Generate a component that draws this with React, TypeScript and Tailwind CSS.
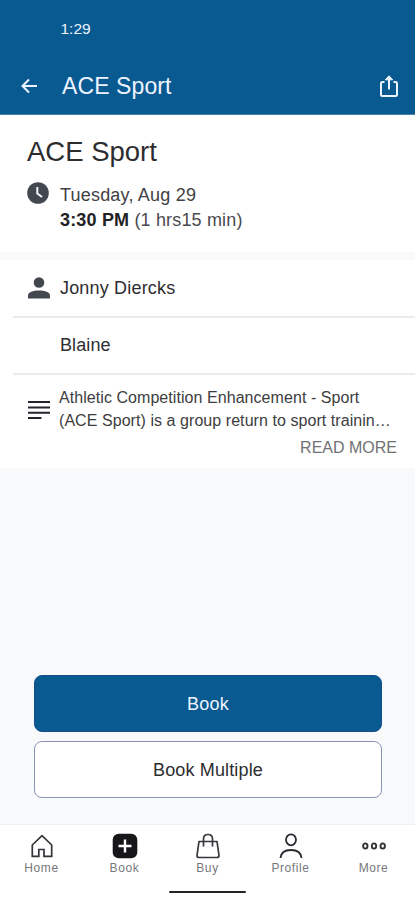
import React from "react";

function NavItem({ label, children }: { label: string; children: React.ReactNode }) {
  return (
    <button className="flex w-[83px] flex-col items-center">
      <span className="flex h-[28px] items-center justify-center">{children}</span>
      <span className="text-[12px] leading-[16px] tracking-[0.6px] text-[#77787b]">{label}</span>
    </button>
  );
}

export default function App() {
  return (
    <div className="flex h-[900px] w-[415px] flex-col overflow-hidden whitespace-nowrap bg-[#f7f9fb] font-['Liberation_Sans',Arial,sans-serif] text-[#2d2d30]">
      <header className="flex h-[115px] shrink-0 flex-col border-b border-[#4c7fac] bg-[#095a90] text-[#eef4ff]">
        <div className="pl-[60.500px] pt-[19px] text-[15.500px] leading-[20px]">1:29</div>
        <div className="mt-[32px] flex h-[30px] items-center pl-[20px] pr-[16px]">
          <svg width="18" height="18" viewBox="0 0 18 18" fill="none" stroke="currentColor" strokeWidth="2">
            <path d="M17 9H2.500M9 2.500 2.500 9l6.500 6.500" />
          </svg>
          <h1 className="ml-[24px] flex-1 text-[23px] leading-[30px] tracking-[0.1px]">ACE Sport</h1>
          <svg width="20" height="24" viewBox="0 0 20 24" fill="none" stroke="currentColor" strokeWidth="2" strokeLinejoin="round">
            <path d="M5.500 8H3.500Q2 8 2 9.500V20.500Q2 22 3.500 22H16.500Q18 22 18 20.500V9.500Q18 8 16.500 8H14.500M10 15.500V4" />
            <path d="M10 1.800 6.200 5.800H13.800Z" fill="currentColor" strokeWidth="1" />
          </svg>
        </div>
      </header>

      <section className="h-[137px] shrink-0 bg-white pl-[27px] pt-[20px]">
        <h2 className="text-[27.500px] leading-[34px]">ACE Sport</h2>
        <div className="mt-[13px] flex items-start">
          <svg width="22" height="22" viewBox="0 0 22 22">
            <circle cx="11" cy="11" r="10.800" fill="#434850" />
            <path d="M10.300 5v6.500l4.800 3.500" fill="none" stroke="#f4f5f8" strokeWidth="2" />
          </svg>
          <div className="ml-[11px] pt-px text-[18px] leading-[25px]">
            <div className="tracking-[0.2px] text-[#414145]">Tuesday, Aug 29</div>
            <div className="tracking-[0.17px]"><b className="text-[#222225]">3:30 PM</b> <span className="text-[#4a4a4e]">(1 hrs15 min)</span></div>
          </div>
        </div>
      </section>

      <section className="mt-[8px] h-[208px] shrink-0 bg-white pl-[13px]">
        <div className="flex h-[58px] items-center border-b-2 border-[#ebebed] pl-[15px]">
          <svg width="22" height="22" viewBox="0 0 22 22" fill="#434850">
            <circle cx="11" cy="5.500" r="5.300" />
            <path d="M0 21.500V18.500C0 15 5 13.500 11 13.500s11 1.500 11 5V21.500Z" />
          </svg>
          <span className="ml-[10px] text-[18px] leading-[24px] tracking-[0.18px]">Jonny Diercks</span>
        </div>
        <div className="flex h-[57px] items-center border-b-2 border-[#ebebed] pl-[47px] pb-[1px] text-[18px] leading-[24px] tracking-[0.1px]">Blaine</div>
        <div className="flex pl-[15px] pt-[11px]">
          <svg className="mt-[14px]" width="22" height="20" viewBox="0 0 22 20" fill="none" stroke="#24242f" strokeWidth="2">
            <path d="M0 2H22M0 7.500H22M0 12.800H22M0 18H13.500" />
          </svg>
          <div className="ml-[9px] text-[16px] leading-[23px] tracking-[0.06px] text-[#3d3d40]">
            <div>Athletic Competition Enhancement - Sport</div>
            <div>(ACE Sport) is a group return to sport trainin…</div>
          </div>
        </div>
        <div className="mt-[6px] pr-[18px] text-right text-[16px] leading-[20px] text-[#707174]">READ MORE</div>
      </section>

      <div className="flex flex-1 flex-col justify-end gap-[9px] pb-[26px] pl-[34px] pr-[33px]">
        <button className="h-[57px] rounded-[8px] border border-[#154e8a] bg-[#095a90] pt-px text-[18px] tracking-[0.2px] text-[#edf4ff]">Book</button>
        <button className="h-[57px] rounded-[8px] border border-[#8795b2] bg-white pt-px text-[18px] tracking-[0.15px]">Book Multiple</button>
      </div>

      <nav className="flex h-[76px] shrink-0 flex-col items-center border-t border-[#eef0f2] bg-white">
        <div className="flex w-full pt-[7px]">
          <NavItem label="Home">
            <svg width="24" height="24" viewBox="0 0 24 24" fill="none" stroke="#34343b" strokeWidth="1.700">
              <path d="M2.300 11V22.300H8.800V15.500H14V22.300H21.700V11L12 1.700 2.300 11Z" />
            </svg>
          </NavItem>
          <NavItem label="Book">
            <svg width="26" height="26" viewBox="0 0 26 26">
              <rect x="0.700" y="0.700" width="24.600" height="24.500" rx="6" fill="#17171a" />
              <path d="M13 6.500V19.500M6.500 13H19.500" stroke="#fff" strokeWidth="2.400" />
            </svg>
          </NavItem>
          <NavItem label="Buy">
            <svg width="26" height="26" viewBox="0 0 26 26" fill="none" stroke="#37373c" strokeWidth="1.700" strokeLinejoin="round">
              <path d="M4 8.500H22L24 22.500Q24 24.500 22 24.500H4Q2 24.500 2 22.500Z" />
              <path d="M8.500 13.500V6Q8.500 1.500 13 1.500T17.500 6V13.500" />
            </svg>
          </NavItem>
          <NavItem label="Profile">
            <svg width="24" height="26" viewBox="0 0 24 26" fill="none" stroke="#29292f" strokeWidth="1.800">
              <ellipse cx="12" cy="6.800" rx="5" ry="5.500" />
              <path d="M1.500 25C2 19.500 6.500 17 12 17s10 2.500 10.500 8" />
            </svg>
          </NavItem>
          <NavItem label="More">
            <svg width="24" height="8" viewBox="0 0 24 8" fill="none" stroke="#303035" strokeWidth="1.900">
              <ellipse cx="3.300" cy="4" rx="2.200" ry="2.600" />
              <ellipse cx="12" cy="4" rx="2.200" ry="2.600" />
              <ellipse cx="20.700" cy="4" rx="2.200" ry="2.600" />
            </svg>
          </NavItem>
        </div>
        <div className="mt-[15px] h-[2px] w-[77px] rounded-full bg-[#242426]" />
      </nav>
    </div>
  );
}
